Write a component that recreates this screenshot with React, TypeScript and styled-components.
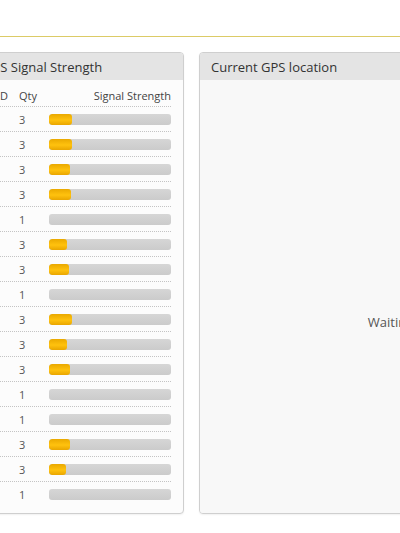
import React from "react";
import styled, { createGlobalStyle } from "styled-components";

const Global = createGlobalStyle`
  html, body { margin: 0; padding: 0; overflow: hidden; background: #fff; }
  body { font-family: "Open Sans", "Liberation Sans", sans-serif; color: #333; }
`;

const Page = styled.div`
  width: 400px;
  height: 533px;
  overflow: hidden;
`;

const TopBar = styled.div`
  height: 36px;
  border-bottom: 1px solid #dccb66;
  box-shadow: 0 -1px 0 #f4edc0;
`;

const Columns = styled.div`
  display: flex;
  gap: 15px;
  margin-top: 15px;
  margin-left: -29px;
  align-items: stretch;
`;

const Panel = styled.div<{ $w: number; $bg: string }>`
  flex: 0 0 ${(p) => p.$w}px;
  width: ${(p) => p.$w}px;
  box-sizing: border-box;
  border: 1px solid #cfcfcf;
  border-radius: 4px;
  background: ${(p) => p.$bg};
  box-shadow: 0 1px 2px rgba(0, 0, 0, 0.06);
  display: flex;
  flex-direction: column;
  overflow: hidden;
`;

const PanelHeader = styled.div`
  height: 27px;
  background: #e4e4e4;
  padding-left: 11px;
  display: flex;
  align-items: center;
  font-size: 13px;
  color: #333;
  white-space: nowrap;
`;

const TableBody = styled.div`
  padding: 4px 12px 7px 6px;
`;

const Row = styled.div<{ $head?: boolean; $last?: boolean }>`
  display: grid;
  grid-template-columns: 41px 30px 1fr;
  align-items: center;
  height: ${(p) => (p.$head ? 22 : 24)}px;
  border-bottom: ${(p) => (p.$last ? "none" : "1px dotted #c4c4c4")};
  font-size: 11px;
  color: ${(p) => (p.$head ? "#444" : "#555")};
`;

const Cell = styled.div<{ $right?: boolean }>`
  text-align: ${(p) => (p.$right ? "right" : "left")};
  white-space: nowrap;
`;

const Bar = styled.div`
  height: 11px;
  border-radius: 3px;
  background: linear-gradient(#d6d6d6, #cbcbcb);
  overflow: hidden;
  display: flex;
`;

const Fill = styled.div`
  height: 100%;
  border-radius: 3px;
  background: linear-gradient(#eaa900, #ffc20e 55%, #e9a600);
`;

const MapBody = styled.div`
  flex: 1;
  display: flex;
  align-items: center;
  justify-content: center;
  padding-top: 50px;
  font-size: 13px;
  color: #555;
  white-space: nowrap;
  background: #f8f8f8;
`;

const sats = [
  { id: 2, q: 3, w: 23 },
  { id: 5, q: 3, w: 23 },
  { id: 6, q: 3, w: 21 },
  { id: 9, q: 3, w: 22 },
  { id: 12, q: 1, w: 0 },
  { id: 13, q: 3, w: 18 },
  { id: 15, q: 3, w: 20 },
  { id: 17, q: 1, w: 0 },
  { id: 19, q: 3, w: 23 },
  { id: 20, q: 3, w: 18 },
  { id: 24, q: 3, w: 21 },
  { id: 25, q: 1, w: 0 },
  { id: 28, q: 1, w: 0 },
  { id: 29, q: 3, w: 21 },
  { id: 30, q: 3, w: 17 },
  { id: 32, q: 1, w: 0 },
];

export default function App() {
  return (
    <Page>
      <Global />
      <TopBar />
      <Columns>
        <Panel $w={213} $bg="#fcfcfc">
          <PanelHeader>GPS Signal Strength</PanelHeader>
          <TableBody>
            <Row $head>
              <Cell>Sat ID</Cell>
              <Cell>Qty</Cell>
              <Cell $right>Signal Strength</Cell>
            </Row>
            {sats.map((s, i) => (
              <Row key={i} $last={i === sats.length - 1}>
                <Cell>{s.id}</Cell>
                <Cell>{s.q}</Cell>
                <Cell $right>
                  <Bar>
                    <Fill style={{ width: `${s.w}px` }} />
                  </Bar>
                </Cell>
              </Row>
            ))}
          </TableBody>
        </Panel>
        <Panel $w={480} $bg="#f8f8f8">
          <PanelHeader>Current GPS location</PanelHeader>
          <MapBody>Waiting for 3D GPS fix...</MapBody>
        </Panel>
      </Columns>
    </Page>
  );
}
